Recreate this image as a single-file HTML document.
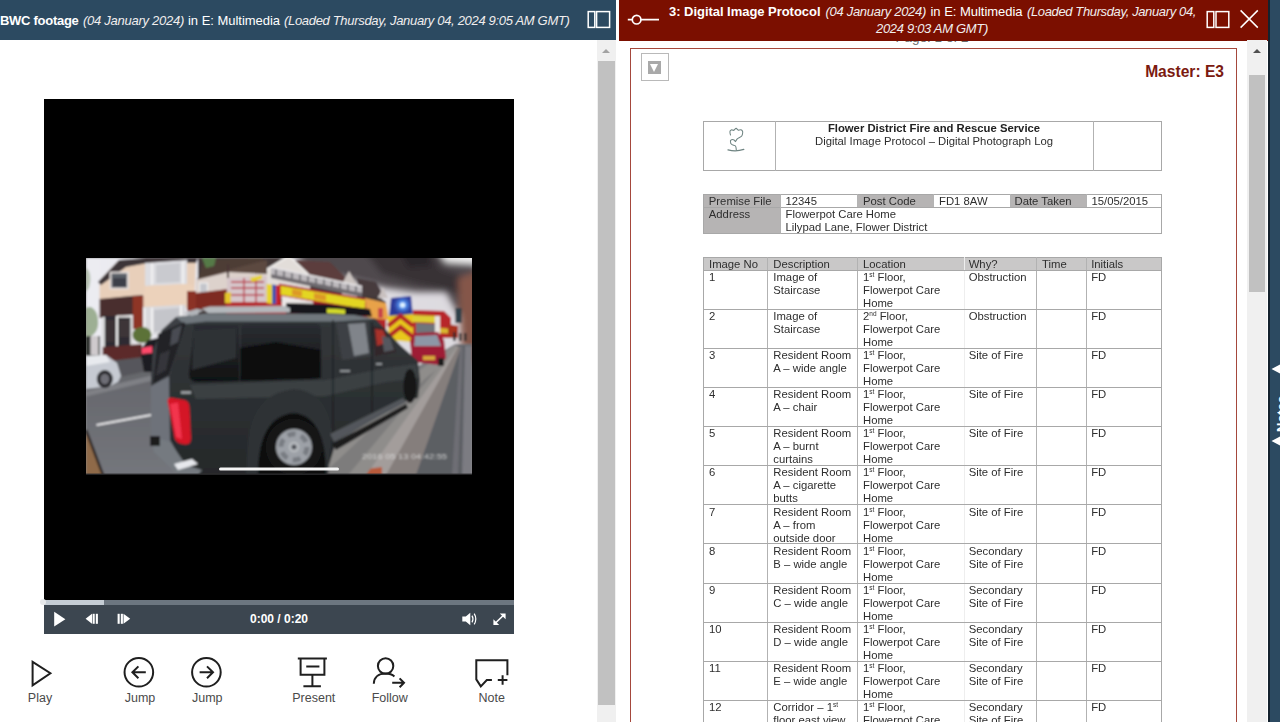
<!DOCTYPE html>
<html lang="en">
<head>
<meta charset="utf-8">
<title>Multimedia viewer</title>
<style>
*{box-sizing:border-box;margin:0;padding:0}
html,body{width:1280px;height:722px;overflow:hidden;background:#fff}
body{position:relative;font-family:"Liberation Sans",sans-serif;color:#222}
.abs{position:absolute}
/* headers */
#hl{left:0;top:0;width:616px;height:40.4px;background:#2c4a61;overflow:hidden}
#hr{left:619px;top:0;width:649px;height:40.6px;background:#7b0f00;overflow:hidden}
.ht{position:absolute;white-space:nowrap;color:#fff;font-size:13px;line-height:17px;transform-origin:0 50%}
.ht.b{font-weight:bold}
.ht.i{font-style:italic;color:#f1eeee}
/* right strip */
#strip{left:1268px;top:0;width:12px;height:722px;background:#2c4a61;border-left:2px solid #14222e}
/* scrollbars */
.track{background:#f0f0f0}
.thumb{background:#c1c1c1}
.arr{width:0;height:0;border-left:4px solid transparent;border-right:4px solid transparent;border-bottom:4px solid #a3a3a3}
/* left panel */
#video{left:44px;top:99px;width:470px;height:501px;background:#000}
#prog{left:44px;top:599.5px;width:470px;height:5px;background:#6c7680}
#progp{left:44px;top:599.5px;width:60px;height:5px;background:#c4ccd4}
#ctrl{left:44px;top:605px;width:470px;height:29px;background:#3c4650}
#time{left:179px;top:611px;width:200px;text-align:center;color:#fff;font-size:12px;font-weight:bold;line-height:16px}
.lbl{position:absolute;font-size:12.5px;line-height:14px;color:#4a4a4a;text-align:center;width:80px;white-space:nowrap}
/* right panel */
#frame{left:630px;top:48px;width:607px;height:700px;border:1.5px solid #a5483c;background:#fff}
#pg{left:832px;top:29.8px;width:200px;text-align:center;font-size:13.5px;line-height:16px;color:#6a6a6a}
#master{left:1100px;top:61.8px;width:124px;text-align:right;font-size:15.6px;font-weight:bold;color:#7b1a10;line-height:20px;white-space:nowrap}
#dd{left:641px;top:53px;width:27.5px;height:28px;border:1px solid #b9b9b9;background:#fff}
#dd i{position:absolute;left:6px;top:7px;width:13px;height:13px;background:#a9a9a9}
#dd b{position:absolute;left:8px;top:10px;width:0;height:0;border-left:4.5px solid transparent;border-right:4.5px solid transparent;border-top:8px solid #fff}
/* document */
#doc{left:0;top:0;width:1280px;height:722px;overflow:hidden;font-size:11.3px;line-height:13px;color:#2e2e2e;pointer-events:none;filter:blur(0.4px)}
#doc .bx{position:absolute;border:1px solid #a8a8a8}
#doc .g{position:absolute;background:#c9c8c8}
#doc .vl{position:absolute;width:1px;background:#b2b2b2}
#doc .hl{position:absolute;height:1px;background:#a8a8a8}
#doc .t{position:absolute;white-space:nowrap}
sup{font-size:6.5px;line-height:0;vertical-align:4px}
</style>
</head>
<body>

<!-- ===== left header ===== -->
<div id="hl" class="abs">
  <span class="ht b" id="l1" style="left:0;top:11.8px;letter-spacing:-0.283px">BWC footage</span>
  <span class="ht i" id="l2" style="left:83px;top:11.8px;letter-spacing:-0.266px">(04 January 2024)</span>
  <span class="ht"   id="l3" style="left:188px;top:11.8px;letter-spacing:-0.030px">in E: Multimedia</span>
  <span class="ht i" id="l4" style="left:284px;top:11.8px;letter-spacing:-0.321px">(Loaded Thursday, January 04, 2024 9:05 AM GMT)</span>
  <svg class="abs" style="left:586px;top:9px" width="26" height="21" viewBox="0 0 26 21"><rect x="2.2" y="2.6" width="6.6" height="15.8" fill="none" stroke="#fff" stroke-width="1.5"/><rect x="10.6" y="2.6" width="13" height="15.8" fill="none" stroke="#fff" stroke-width="1.5"/></svg>
</div>

<!-- ===== right header ===== -->
<div id="pg" class="abs">Page: 1 of 2</div>
<div id="hr" class="abs">
  <svg class="abs" style="left:6px;top:11px" width="38" height="18" viewBox="0 0 38 18"><path d="M2.800 8.700H7.400M16 8.700H34" stroke="#fff" stroke-width="1.700" fill="none"/><circle cx="11.600" cy="8.700" r="4.300" fill="none" stroke="#fff" stroke-width="1.700"/></svg>
  <span class="ht b" id="r1" style="left:50px;top:2.7px;letter-spacing:-0.037px">3: Digital Image Protocol</span>
  <span class="ht i" id="r2" style="left:206.5px;top:2.7px;letter-spacing:-0.295px">(04 January 2024)</span>
  <span class="ht"   id="r3" style="left:311.5px;top:2.7px;letter-spacing:-0.030px">in E: Multimedia</span>
  <span class="ht i" id="r4" style="left:408px;top:2.7px;letter-spacing:-0.369px">(Loaded Thursday, January 04,</span>
  <svg class="abs" style="left:585px;top:8px" width="60" height="24" viewBox="0 0 60 24"><g fill="none" stroke="#fff" stroke-width="1.500"><rect x="3.200" y="3.600" width="6.600" height="15.800"/><rect x="12" y="3.600" width="12.800" height="15.800"/><path d="M36.600 2.400L53.800 19.600M53.800 2.400L36.600 19.600"/></g></svg>
  <span class="ht i" id="r5" style="left:257px;top:19.7px;letter-spacing:-0.312px">2024 9:03 AM GMT)</span>
</div>

<div id="strip" class="abs"></div>
<svg class="abs" style="left:1268px;top:355px" width="12" height="100" viewBox="0 0 12 100"><path d="M3.500 14L12 9.500V18.500ZM3.500 86L12 81.500V90.500Z" fill="#fff"/><text transform="translate(17.500 77) rotate(-90)" font-family="Liberation Sans, sans-serif" font-size="13" font-weight="bold" fill="#fff">Notes</text></svg>

<!-- ===== left panel ===== -->
<div id="video" class="abs"></div>
<!--PHOTO-->
<svg class="abs" style="left:86px;top:258px" width="386" height="217" viewBox="0 0 386 217">
<defs>
<filter id="bl" x="-5%" y="-5%" width="110%" height="110%"><feGaussianBlur stdDeviation="0.8"/></filter>
<filter id="bl2" x="-30%" y="-30%" width="160%" height="160%"><feGaussianBlur stdDeviation="3.2"/></filter>
<filter id="bl3" x="-40%" y="-40%" width="180%" height="180%"><feGaussianBlur stdDeviation="2"/></filter>
<clipPath id="pc"><rect x="0" y="0" width="386" height="217"/></clipPath>
<linearGradient id="sky" x1="0" y1="0" x2="1" y2="0"><stop offset="0" stop-color="#ececf2"/><stop offset="1" stop-color="#dcd9de"/></linearGradient>
<linearGradient id="road" x1="0" y1="0" x2="0" y2="1"><stop offset="0" stop-color="#64656a"/><stop offset="1" stop-color="#74767c"/></linearGradient>
<linearGradient id="body" x1="0" y1="0" x2="0" y2="1"><stop offset="0" stop-color="#34383b"/><stop offset="1" stop-color="#25282a"/></linearGradient>
<linearGradient id="win" x1="0" y1="0" x2="0" y2="1"><stop offset="0" stop-color="#2b2e32"/><stop offset="0.55" stop-color="#1d1f22"/><stop offset="1" stop-color="#0f1011"/></linearGradient>
</defs>
<g clip-path="url(#pc)">
<rect width="386" height="217" fill="#8b8a8c"/>
<g filter="url(#bl)">
<!-- sky -->
<rect x="0" y="0" width="386" height="120" fill="url(#sky)"/>
<!-- smoke -->
<g filter="url(#bl2)">
<path d="M200 -14H350L356 -2 390 4 396 70 372 56 360 34 330 34 300 30 266 22 224 12Z" fill="#4f494d"/>
<path d="M276 -10H344L354 10 378 18 386 42 362 32 330 26 296 16Z" fill="#373135"/>
<path d="M312 -10H340L346 8 322 10Z" fill="#2c272b"/>
<path d="M372 20L396 12V112L376 98Z" fill="#85564a"/>
<path d="M352 -8L392 -8 392 6 360 4Z" fill="#f2f2f2"/>
</g>
<!-- background houses right -->
<path d="M112 0L196 0 214 4 236 6 262 22 286 34 300 44 300 70 112 70Z" fill="#433839"/>
<path d="M118 2L176 0 182 6 140 16 112 22Z" fill="#4e3c36"/>
<path d="M209 2L244 4 262 22 256 28 224 18Z" fill="#5c3e3c"/>
<path d="M176 14L203 -3 224 17 224 40 176 40Z" fill="#e2ddd9"/>
<path d="M178 13L203 -2 222 16" stroke="#f4f2f0" stroke-width="1.600" fill="none"/>
<path d="M256 26L263 13 271 27V40H256Z" fill="#cbc3c0"/>
<path d="M270 20L290 24 298 38 276 38Z" fill="#463a3e"/>
<path d="M292 40L297 29 302 40Z" fill="#c9c1c0"/>
<!-- left tree -->
<path d="M0 50C6 46 12 54 12 62 13 70 10 78 0 80Z" fill="#8fa582" opacity="0.85"/>
<path d="M0 10C4 12 6 20 3 30L0 34Z" fill="#b9c4b4"/>
<!-- house 1 -->
<path d="M13.600 22L32 3 110 0 108 50 13.600 50Z" fill="#e8cfba"/>
<path d="M12 24L33 2 60 0 112 0 110 5 62 5 40 9 15 27Z" fill="#3c3439"/>
<rect x="24.500" y="14.500" width="17.500" height="16" fill="#5a5e66" stroke="#e6e0de" stroke-width="1.800"/>
<rect x="27" y="20" width="13" height="9" fill="#3c4048"/>
<path d="M59 5L101 2V26L59 28Z" fill="#dddde1"/>
<path d="M66 5V27M97 3V26" stroke="#f6f6f6" stroke-width="1.600"/>
<path d="M70 7L94 5V24L70 25Z" fill="#c9cacf"/>
<path d="M59 28L101 26 108 28V48L57 50Z" fill="#ecd2bb"/>
<!-- porch roof, brick -->
<path d="M13.600 41L47 37.700 57 37V60H47V57L13.600 60Z" fill="#4a2e2e"/>
<rect x="46.700" y="38" width="10.600" height="33" fill="#8e3428"/>
<rect x="101" y="33" width="9" height="20" fill="#8b3228"/>
<!-- lower bay window -->
<path d="M57 49L99.500 46.700V75L57 77Z" fill="#d8d8dc"/>
<path d="M58.500 50V76M66 49.500V76M95 47V75" stroke="#f6f6f6" stroke-width="1.800"/>
<path d="M68 52L93 50V72L68 74Z" fill="#c4c5ca"/>
<!-- door -->
<rect x="16.600" y="58" width="30" height="31" fill="#2e2c30"/>
<path d="M17.600 59V89M31 58V89M45.600 57V89M31 58.500H46" stroke="#f1f1f1" stroke-width="2.200" fill="none"/>
<rect x="20" y="62" width="9" height="22" fill="#3a3034"/>
<rect x="33.500" y="62" width="10" height="17" fill="#3c3438"/>
<!-- house 2 -->
<path d="M110 21L142 12 181 2 181 21 142 24Z" fill="#5c4840"/>
<path d="M110 22L142 14 181 16 181 40 110 36Z" fill="#ddd2cc"/>
<rect x="113.500" y="25" width="8" height="12" fill="#c3c5cb" stroke="#f1f1f1" stroke-width="1.200"/>
<path d="M110 35L142 31V52L110 51Z" fill="#7e2a24"/>
<rect x="141" y="6" width="2" height="42" fill="#4a3634"/>
<path d="M116 0L130 0 128 8 120 10Z" fill="#557a46"/>
<!-- bush -->
<ellipse cx="56" cy="77" rx="9.500" ry="8" fill="#5c7238"/>
<!-- low brick wall -->
<path d="M16.600 89L56 86V108H16.600Z" fill="#5c2c2a"/>
<path d="M0 78H14V100H0Z" fill="#2a2e2c"/>
<rect x="4.500" y="78" width="8" height="19" fill="#cfcacd"/>
<!-- road -->
<path d="M0 121L70 104 125 104V217H0Z" fill="url(#road)"/>
<path d="M16 104L66 98V112L20 122Z" fill="#56575c"/>
<path d="M0 136L66 120" stroke="#7f8085" stroke-width="5"/>
<path d="M10.500 167L65 157" stroke="#e6e6e8" stroke-width="2.200"/>
<!-- silver car -->
<path d="M0 98L20 97 31 105 35 118 32 124 24 128 0 131Z" fill="#c6cad2"/>
<path d="M0 98L20 97 24 104 0 108Z" fill="#e8eaee"/>
<ellipse cx="18.800" cy="121" rx="8" ry="9" fill="#26262a"/>
<ellipse cx="18.800" cy="121" rx="4.500" ry="5.200" fill="#6e6e76"/>
<!-- dark car w/ light -->
<path d="M54 92L62 82 72 80V114H58Z" fill="#1f1f23"/>
<path d="M55.500 90L66 88V95L55.500 96Z" fill="#ff4a6a"/>
<!-- fire engine 1 -->
<path d="M140 44L290 44 300 56 300 82 140 72Z" fill="#b5262a"/>
<path d="M141 20L181 18V44H141Z" fill="#d6c6ca"/>
<path d="M145 24H178M145 30H178M145 37H178M158 20V44M170 20V44" stroke="#b8404c" stroke-width="1.400" fill="none"/>
<path d="M164 20L176 17V21L166 24Z" fill="#e6d22a"/>
<path d="M139 35L145 34V45H139Z" fill="#e4c62a"/>
<path d="M185 9L276 28.500 276 35 185 16Z" fill="#bdb9bd"/>
<path d="M185 9L276 28.500" stroke="#e8e6e8" stroke-width="1.400"/>
<path d="M190 11.500V17M198 13V19M206 15V21M214 16.500V22.500M222 18V24M230 20V26M238 21.500V27.500M246 23V29M254 25V31M262 26.500V32.500M270 28V34" stroke="#55555a" stroke-width="1.400"/>
<path d="M185 16L276 35 276 39 185 20Z" fill="#6e6a70"/>
<path d="M193 25.500L280 40.500V54L193 39Z" fill="#b0222a"/>
<path d="M193 27.400L279 42V51L193 36.500Z" fill="#e3d624"/>
<path d="M206 31L216 32.700V39L206 37.300ZM228 35L240 37V43L228 41Z" fill="#d8702a" opacity="0.600"/>
<path d="M196 38L227 43.500V52H196Z" fill="#ece8e8"/>
<path d="M180.600 26L186 26.500V46L180.600 45Z" fill="#e8d42a"/>
<path d="M186 26.500L190 27V46L186 46Z" fill="#3a56b0"/>
<path d="M190 27L194.700 27.500V46L190 46Z" fill="#c4242c"/>
<!-- lit cab window -->
<path d="M279 40L300 45 303 62 281 60Z" fill="#e8a248"/><path d="M292 50L297 50V60L292 60Z" fill="#c8444a"/>
<!-- blue light -->
<path d="M305 40L325 38 327 58 303 59Z" fill="#2a3796"/>
<circle cx="316.600" cy="47" r="6" fill="#5aa2ff" filter="url(#bl3)"/>
<circle cx="316.600" cy="47" r="2.600" fill="#e2f4ff"/>
<!-- chevrons -->
<path d="M301.500 58L327 56V84L303 82Z" fill="#e8c81e"/>
<path d="M302 68L314.500 58 327 68M302 79L314.500 69 327 79" stroke="#b42428" stroke-width="4.200" fill="none"/>
<!-- fire engine 2 -->
<path d="M327 52L358 53 365 60V80L327 80Z" fill="#b8262c"/>
<path d="M327 57L352 58V65L327 64Z" fill="#dccf34"/>
<path d="M330 65L349 66V76L330 75Z" fill="#70747a"/>
<path d="M349 58L354 58V78L349 78Z" fill="#e6e2e0"/>
<path d="M354 70L368 71V76L354 75Z" fill="#d8b82e"/>
<rect x="369.400" y="50" width="6.200" height="15" fill="#2f4048"/>
<path d="M362 66L372 68V80L362 80Z" fill="#a8301c"/>
<!-- pavement right & barrier -->
<path d="M332 108L369 86 386 86V217H250Z" fill="#7d7d80"/>
<path d="M372 87L386 87V217H300Z" fill="#5c5e64"/>
<path d="M370 88L375 89 330 217H280Z" fill="#857e7c"/>
<path d="M368 88L372 89 300 217H280Z" fill="#a39d9b"/>
<path d="M379 88H386V217H376Z" fill="#7c7c82"/>
<path d="M374 88L377 88 372 217H366Z" fill="#6e6e74"/>
<path d="M281 211L296 209V217H279Z" fill="#b85a3a"/>
<!-- sidewalk between truck & barrier -->
<path d="M334 112L366 89 371 89 280 217H150L250 190Z" fill="#8f8d8b"/>
<path d="M340 120L350 112 262 217H236Z" fill="#7d7c7c"/>
<!-- people far right -->
<rect x="367" y="74" width="2.500" height="9" fill="#26262a"/><rect x="373" y="75" width="2.500" height="8" fill="#2e2a2c"/><rect x="378" y="75" width="2.500" height="8" fill="#2e2a2c"/>
<!-- red car -->
<path d="M324 82L330 75 352 74 358 82 360 100 354 107 326 104Z" fill="#9e1c36"/>
<path d="M329 78L351 77 355 88 328 88Z" fill="#8d97a6"/>
<rect x="337" y="98" width="12" height="4" fill="#d8a83a"/>
<path d="M352 100L358 100V108H352Z" fill="#1c1c1e"/>
<!-- roof rack -->
<path d="M200 45L240 46 284 51 286 58.500 240 56.500 200 55.500Z" fill="#17181a"/>
<path d="M241 50.600L259 51.500V56L241 55.300Z" fill="#d4dc2a"/>
<!-- TRUCK -->
<path d="M65 181L65 120 67 92 76 72 90 59 120 55.500 240 56 268 57 290 61 314 87 332 103 334 122 332 140 318 143 250 184 240 217 114 217 100 211 68 190Z" fill="url(#body)"/>
<!-- rear tailgate lighter -->
<path d="M65 181L65 128 83 118 84 182 100 211 86 204 68 190Z" fill="#6e727a"/>
<path d="M66 126L67 92 76 72 90 60 100 60 98 66 84 118Z" fill="#3c3f44"/>
<!-- roof highlight -->
<path d="M90 59L120 55.500 240 56 268 57 290 61 250 63.500 120 63.500 98 66Z" fill="#70777d"/>
<path d="M116 50.500L124 48.600 199 48 204 50 204 54.500 122 55Z" fill="#b4b8bc"/>
<path d="M98 55L110 51 118 52 106 58Z" fill="#b0b4b8"/>

<!-- rear window -->
<path d="M72 76L98 64 99.500 66 83 117 67 126Z" fill="#232427"/>
<path d="M86 72L96 67 92 84 84 88Z" fill="#4a4c52"/>
<path d="M74 96L84 92 80 112 70 118Z" fill="#34363a"/>
<!-- side canopy window -->
<path d="M108 69Q104 66 112 66L228 65Q235 65 235 71V116Q235 121 229 121L112 124Q103 124 103 116Z" fill="url(#win)"/>
<path d="M154 65.500V123" stroke="#34383b" stroke-width="1.600"/>
<path d="M154 90L190 84 235 92V120L154 123Z" fill="#0e0f10"/>
<path d="M108 72L150 70V100L106 112Z" fill="#2e3135"/>
<!-- cab windows -->
<path d="M250 65L282 63 285 98 256 102Z" fill="#3c4044"/>
<path d="M262 66L279 65 283 95 268 98Z" fill="#80848a"/>
<path d="M286.500 68L298 70 310.600 94 289 98Z" fill="#33282a"/>
<path d="M289 71L297 72 302 84 291 88Z" fill="#a8302c"/>
<path d="M296 78L304 80 308 92 298 94Z" fill="#55595e"/>
<!-- body shading highlight -->
<path d="M104 127L240 122 300 110 330 106 333 120 300 124 240 138 110 141Z" fill="#3b4043"/>
<path d="M247 62V180M286 64V160" stroke="#1c1e20" stroke-width="1.200"/>
<!-- tail light -->
<path d="M81.500 143Q81.500 139 87 140L98 142Q103 143 103.500 149L105 180Q105 187 99 186.500L94 185.500Q88.500 184 88 176Z" fill="#d41226"/>
<path d="M84 146L92 144.500 96 181 90 179Z" fill="#f2344e"/>
<!-- bumper -->
<path d="M65 178L84 184 100 207 116 212 112 217 90 215 68 194Z" fill="#757a80"/>
<path d="M88 206L106 201 112 206 92 212Z" fill="#e6e8ec"/>
<rect x="64" y="178" width="10" height="10" fill="#1a1a1c"/>
<path d="M95 134.500H105" stroke="#b0b4b8" stroke-width="2.200"/>
<!-- rear wheel arch + wheel -->
<path d="M162 184Q166 136 208 131 240 133 246 172L242 217H160Z" fill="#2e3235"/>
<path d="M172 217Q172 158 208 155 240 158 240 217Z" fill="#0f1011"/>
<circle cx="208" cy="189" r="28" fill="#161718"/>
<circle cx="208" cy="189" r="18" fill="#9da1a7"/>
<circle cx="208" cy="189" r="13" fill="none" stroke="#787c82" stroke-width="5" stroke-dasharray="8 5.600"/>
<circle cx="208" cy="189" r="5.500" fill="#b4b8bc"/>
<circle cx="208" cy="189" r="2.500" fill="#4a4e54"/>
<!-- side step -->
<path d="M244 176L317 140 320 144 248 184Z" fill="#53575b"/>
<path d="M246 186L320 146 322 150 250 192Z" fill="#1a1b1c"/>
<!-- front wheel -->
<ellipse cx="324" cy="128" rx="6.500" ry="17" fill="#131415"/>
<!-- handles -->
<path d="M254 113H264M290 106H296" stroke="#8e9296" stroke-width="2"/>
<!-- bottom-left corner -->
<path d="M0 174L16 217H0Z" fill="#8f6a48"/>
<path d="M0 172L17 217" stroke="#2a2422" stroke-width="2.500"/>
</g>
<!-- home bar & timestamp -->
<rect x="133" y="209.600" width="120" height="3" rx="1.500" fill="#f4f4f4"/>
<text x="276" y="201" font-family="Liberation Sans, sans-serif" font-size="7.600" fill="#dedede" textLength="85" lengthAdjust="spacingAndGlyphs" filter="url(#bl)" opacity="0.9">2016 05 13 04:42:55</text>
<rect x="0" y="215.600" width="386" height="1.400" fill="#242426"/>
</g>
</svg>
<!--/PHOTO-->
<div id="prog" class="abs"></div><div id="progp" class="abs"></div>
<div id="ctrl" class="abs"></div>
<div class="abs" style="left:40px;top:599px;width:6px;height:6px;border-radius:3px;background:#e6e8ea"></div>
<div id="time" class="abs">0:00 / 0:20</div>

<div class="lbl" style="left:0px;top:690.5px" id="b1">Play</div>
<div class="lbl" style="left:100px;top:690.5px" id="b2">Jump</div>
<div class="lbl" style="left:167.3px;top:690.5px" id="b3">Jump</div>
<div class="lbl" style="left:273.8px;top:690.5px" id="b4">Present</div>
<div class="lbl" style="left:349.7px;top:690.5px" id="b5">Follow</div>
<div class="lbl" style="left:451.7px;top:690.5px" id="b6">Note</div>

<!-- video control icons -->
<svg class="abs" style="left:44px;top:605px" width="470" height="29" viewBox="0 0 470 29">
  <path d="M10.2 6.8V21.6L21.4 14.2Z" fill="#fff"/>
  <path d="M41.600 13.800L48 8.800V18.800Z" fill="#fff"/><rect x="48.600" y="8.800" width="2.100" height="10" fill="#fff"/><rect x="51.800" y="8.800" width="2.100" height="10" fill="#fff"/>
  <rect x="73.600" y="8.800" width="2.100" height="10" fill="#fff"/><rect x="76.800" y="8.800" width="2.100" height="10" fill="#fff"/><path d="M79.500 8.800V18.800L86.200 13.800Z" fill="#fff"/>
  <path d="M418.300 11.600H421.800L426.300 7.800V20.200L421.800 16.400H418.300Z" fill="#fff"/>
  <path d="M428 10.600Q430 14 428 17.400M430.200 8.600Q433.400 14 430.200 19.400" fill="none" stroke="#fff" stroke-width="1.200"/>
  <path d="M451.500 18L459.500 10.200" fill="none" stroke="#fff" stroke-width="1.600"/><path d="M461.600 8.400H455.800L461.600 14.200ZM449.400 19.900V14.200L455.200 19.900Z" fill="#fff"/>
</svg>

<!-- toolbar icons -->
<svg class="abs" style="left:20px;top:650px" width="500" height="45" viewBox="0 0 500 45">
 <g fill="none" stroke="#1f1f1f" stroke-width="2">
  <path d="M12.600 11.800V35.400L30.400 23.200Z" stroke-linejoin="miter"/>
  <circle cx="118.850" cy="22.250" r="14.300"/>
  <path d="M125.800 22.300H112.600M118.400 16.400L112.400 22.300L118.400 28.200"/>
  <circle cx="186.400" cy="22.250" r="14.300"/>
  <path d="M179.600 22.300H192.800M187 16.400L193 22.300L187 28.200"/>
  <path d="M277.800 8.400H306.900M280.600 8.400V24.750H304.400V8.400M286.250 16.500H299.400M292.400 24.750V36.200M283.400 36.200H300.900"/>
  <circle cx="365.600" cy="16" r="7.700"/>
  <path d="M353.800 33.800C354 27 359 23.600 365.600 23.600 369.500 23.600 372.400 24.600 374.400 26.400M372.200 32.800H383.600M379.600 28.400L384 32.800L379.600 37.200"/>
  <path d="M487.400 25.300V10.300H456.300V29.400L460.800 36.400L466.800 30H471.900M477.800 30H487.400M482.600 25.200V34.800"/>
 </g>
</svg>

<!-- left scrollbar -->
<div class="abs track" style="left:596.5px;top:40px;width:19.5px;height:682px"></div>
<div class="abs thumb" style="left:598px;top:61px;width:17px;height:644px"></div>
<div class="abs arr" style="left:601.8px;top:49px"></div>

<!-- ===== right panel ===== -->
<div id="frame" class="abs"></div>
<div id="dd" class="abs"><i></i><b></b></div>
<div id="master" class="abs">Master: E3</div>

<!-- right scrollbar -->
<div class="abs track" style="left:1247px;top:40px;width:20px;height:682px"></div>
<div class="abs thumb" style="left:1249px;top:75px;width:16px;height:217px"></div>
<div class="abs arr" style="left:1253px;top:49px;border-bottom-color:#505050"></div>

<div id="doc" class="abs">
<!--DOC-->
<div class="bx" style="left:703.0px;top:121.0px;width:459.0px;height:49.5px"></div>
<div class="vl" style="left:775.0px;top:121.0px;height:49.5px"></div>
<div class="vl" style="left:1092.7px;top:121.0px;height:49.5px"></div>
<div class="t" style="left:775px;top:121.5px;width:318px;text-align:center;font-weight:bold;color:#222">Flower District Fire and Rescue Service</div>
<div class="t" style="left:775px;top:134.5px;width:318px;text-align:center">Digital Image Protocol – Digital Photograph Log</div>
<svg class="t" style="left:725px;top:125px" width="24" height="30" viewBox="0 0 24 30"><g fill="none" stroke="#6f8482" stroke-width="1.050" stroke-linejoin="round" stroke-linecap="round"><path d="M5.500 10C4.400 6.600 5 5.400 6.100 5 7 4.600 8 5.200 8.800 5.500 9.600 4.600 10.400 3.500 11.100 3.300 12 3.800 12.600 4.800 13.300 5.300 14.400 4.800 15.800 4.600 16.600 5 17.600 5.800 17.900 6.800 17.700 7.700 17.600 9.200 17.200 10.400 16.600 11.100 15.400 12.400 13.400 12.800 12.200 13.800 11.400 14.800 10.900 15.800 10.500 16.600 9.600 15.200 8 14.200 6.600 14.700 5.600 15.200 5.200 16 5.500 16.600 5.400 17.800 5.800 18.800 6.600 19.400 8 20.200 9.800 20.200 10.500 21 11.200 22 11.200 23.600 11.300 24.900"/><path d="M3 24.900Q11.100 27 18.800 24.400" stroke-width="1.300"/></g></svg>
<div class="g" style="left:703.0px;top:193.5px;width:77.0px;height:40.3px;background:#b6b4b4"></div>
<div class="g" style="left:856.5px;top:193.5px;width:76.5px;height:13.7px;background:#b6b4b4"></div>
<div class="g" style="left:1009.5px;top:193.5px;width:76.5px;height:13.7px;background:#b6b4b4"></div>
<div class="bx" style="left:703.0px;top:193.5px;width:459.0px;height:40.3px"></div>
<div class="hl" style="left:780.0px;top:207.2px;width:382.0px"></div>
<div class="hl" style="left:703.0px;top:207.2px;width:77.0px"></div>
<div class="vl" style="left:780.0px;top:193.5px;height:13.7px;background:#b4b4b4"></div>
<div class="vl" style="left:856.5px;top:193.5px;height:13.7px;background:#b4b4b4"></div>
<div class="vl" style="left:933.0px;top:193.5px;height:13.7px;background:#b4b4b4"></div>
<div class="vl" style="left:1009.5px;top:193.5px;height:13.7px;background:#b4b4b4"></div>
<div class="vl" style="left:1086.0px;top:193.5px;height:13.7px;background:#b4b4b4"></div>
<div class="vl" style="left:780.0px;top:207.2px;height:26.6px"></div>
<div class="t" style="left:708.8px;top:195.0px">Premise File</div>
<div class="t" style="left:785.5px;top:195.0px">12345</div>
<div class="t" style="left:863.0px;top:195.0px">Post Code</div>
<div class="t" style="left:939.0px;top:195.0px">FD1 8AW</div>
<div class="t" style="left:1014.5px;top:195.0px">Date Taken</div>
<div class="t" style="left:1091.5px;top:195.0px">15/05/2015</div>
<div class="t" style="left:708.8px;top:208.1px">Address</div>
<div class="t" style="left:785.5px;top:208.1px">Flowerpot Care Home</div>
<div class="t" style="left:785.5px;top:221.0px">Lilypad Lane, Flower District</div>
<div class="g" style="left:703.0px;top:256.6px;width:459.0px;height:13.9px"></div>
<div class="bx" style="left:703.0px;top:256.6px;width:459.0px;height:473.4px"></div>
<div class="vl" style="left:766.8px;top:256.6px;height:473.4px"></div>
<div class="vl" style="left:857.3px;top:256.6px;height:473.4px"></div>
<div class="vl" style="left:963.7px;top:256.6px;height:473.4px;background:#eeeeee"></div>
<div class="vl" style="left:1035.7px;top:256.6px;height:473.4px"></div>
<div class="vl" style="left:1086.3px;top:256.6px;height:473.4px"></div>
<div class="t" style="left:709.0px;top:257.8px">Image No</div>
<div class="t" style="left:773.3px;top:257.8px">Description</div>
<div class="t" style="left:863.0px;top:257.8px">Location</div>
<div class="t" style="left:968.7px;top:257.8px">Why?</div>
<div class="t" style="left:1042.0px;top:257.8px">Time</div>
<div class="t" style="left:1091.2px;top:257.8px">Initials</div>
<div class="hl" style="left:703.0px;top:269.5px;width:459.0px"></div>
<div class="t" style="left:709.0px;top:270.8px">1</div>
<div class="t" style="left:773.3px;top:270.8px">Image of</div>
<div class="t" style="left:773.3px;top:283.8px">Staircase</div>
<div class="t" style="left:863.0px;top:270.8px">1<sup>st</sup> Floor,</div>
<div class="t" style="left:863.0px;top:283.8px">Flowerpot Care</div>
<div class="t" style="left:863.0px;top:296.8px">Home</div>
<div class="t" style="left:968.7px;top:270.8px">Obstruction</div>
<div class="t" style="left:1091.2px;top:270.8px">FD</div>
<div class="hl" style="left:703.0px;top:308.6px;width:459.0px"></div>
<div class="t" style="left:709.0px;top:309.9px">2</div>
<div class="t" style="left:773.3px;top:309.9px">Image of</div>
<div class="t" style="left:773.3px;top:322.9px">Staircase</div>
<div class="t" style="left:863.0px;top:309.9px">2<sup>nd</sup> Floor,</div>
<div class="t" style="left:863.0px;top:322.9px">Flowerpot Care</div>
<div class="t" style="left:863.0px;top:335.9px">Home</div>
<div class="t" style="left:968.7px;top:309.9px">Obstruction</div>
<div class="t" style="left:1091.2px;top:309.9px">FD</div>
<div class="hl" style="left:703.0px;top:347.8px;width:459.0px"></div>
<div class="t" style="left:709.0px;top:349.1px">3</div>
<div class="t" style="left:773.3px;top:349.1px">Resident Room</div>
<div class="t" style="left:773.3px;top:362.1px">A – wide angle</div>
<div class="t" style="left:863.0px;top:349.1px">1<sup>st</sup> Floor,</div>
<div class="t" style="left:863.0px;top:362.1px">Flowerpot Care</div>
<div class="t" style="left:863.0px;top:375.1px">Home</div>
<div class="t" style="left:968.7px;top:349.1px">Site of Fire</div>
<div class="t" style="left:1091.2px;top:349.1px">FD</div>
<div class="hl" style="left:703.0px;top:386.9px;width:459.0px"></div>
<div class="t" style="left:709.0px;top:388.2px">4</div>
<div class="t" style="left:773.3px;top:388.2px">Resident Room</div>
<div class="t" style="left:773.3px;top:401.2px">A – chair</div>
<div class="t" style="left:863.0px;top:388.2px">1<sup>st</sup> Floor,</div>
<div class="t" style="left:863.0px;top:401.2px">Flowerpot Care</div>
<div class="t" style="left:863.0px;top:414.2px">Home</div>
<div class="t" style="left:968.7px;top:388.2px">Site of Fire</div>
<div class="t" style="left:1091.2px;top:388.2px">FD</div>
<div class="hl" style="left:703.0px;top:426.0px;width:459.0px"></div>
<div class="t" style="left:709.0px;top:427.3px">5</div>
<div class="t" style="left:773.3px;top:427.3px">Resident Room</div>
<div class="t" style="left:773.3px;top:440.3px">A – burnt</div>
<div class="t" style="left:773.3px;top:453.3px">curtains</div>
<div class="t" style="left:863.0px;top:427.3px">1<sup>st</sup> Floor,</div>
<div class="t" style="left:863.0px;top:440.3px">Flowerpot Care</div>
<div class="t" style="left:863.0px;top:453.3px">Home</div>
<div class="t" style="left:968.7px;top:427.3px">Site of Fire</div>
<div class="t" style="left:1091.2px;top:427.3px">FD</div>
<div class="hl" style="left:703.0px;top:465.1px;width:459.0px"></div>
<div class="t" style="left:709.0px;top:466.4px">6</div>
<div class="t" style="left:773.3px;top:466.4px">Resident Room</div>
<div class="t" style="left:773.3px;top:479.4px">A – cigarette</div>
<div class="t" style="left:773.3px;top:492.4px">butts</div>
<div class="t" style="left:863.0px;top:466.4px">1<sup>st</sup> Floor,</div>
<div class="t" style="left:863.0px;top:479.4px">Flowerpot Care</div>
<div class="t" style="left:863.0px;top:492.4px">Home</div>
<div class="t" style="left:968.7px;top:466.4px">Site of Fire</div>
<div class="t" style="left:1091.2px;top:466.4px">FD</div>
<div class="hl" style="left:703.0px;top:504.3px;width:459.0px"></div>
<div class="t" style="left:709.0px;top:505.6px">7</div>
<div class="t" style="left:773.3px;top:505.6px">Resident Room</div>
<div class="t" style="left:773.3px;top:518.6px">A – from</div>
<div class="t" style="left:773.3px;top:531.6px">outside door</div>
<div class="t" style="left:863.0px;top:505.6px">1<sup>st</sup> Floor,</div>
<div class="t" style="left:863.0px;top:518.6px">Flowerpot Care</div>
<div class="t" style="left:863.0px;top:531.6px">Home</div>
<div class="t" style="left:968.7px;top:505.6px">Site of Fire</div>
<div class="t" style="left:1091.2px;top:505.6px">FD</div>
<div class="hl" style="left:703.0px;top:543.4px;width:459.0px"></div>
<div class="t" style="left:709.0px;top:544.7px">8</div>
<div class="t" style="left:773.3px;top:544.7px">Resident Room</div>
<div class="t" style="left:773.3px;top:557.7px">B – wide angle</div>
<div class="t" style="left:863.0px;top:544.7px">1<sup>st</sup> Floor,</div>
<div class="t" style="left:863.0px;top:557.7px">Flowerpot Care</div>
<div class="t" style="left:863.0px;top:570.7px">Home</div>
<div class="t" style="left:968.7px;top:544.7px">Secondary</div>
<div class="t" style="left:968.7px;top:557.7px">Site of Fire</div>
<div class="t" style="left:1091.2px;top:544.7px">FD</div>
<div class="hl" style="left:703.0px;top:582.5px;width:459.0px"></div>
<div class="t" style="left:709.0px;top:583.8px">9</div>
<div class="t" style="left:773.3px;top:583.8px">Resident Room</div>
<div class="t" style="left:773.3px;top:596.8px">C – wide angle</div>
<div class="t" style="left:863.0px;top:583.8px">1<sup>st</sup> Floor,</div>
<div class="t" style="left:863.0px;top:596.8px">Flowerpot Care</div>
<div class="t" style="left:863.0px;top:609.8px">Home</div>
<div class="t" style="left:968.7px;top:583.8px">Secondary</div>
<div class="t" style="left:968.7px;top:596.8px">Site of Fire</div>
<div class="t" style="left:1091.2px;top:583.8px">FD</div>
<div class="hl" style="left:703.0px;top:621.7px;width:459.0px"></div>
<div class="t" style="left:709.0px;top:623.0px">10</div>
<div class="t" style="left:773.3px;top:623.0px">Resident Room</div>
<div class="t" style="left:773.3px;top:636.0px">D – wide angle</div>
<div class="t" style="left:863.0px;top:623.0px">1<sup>st</sup> Floor,</div>
<div class="t" style="left:863.0px;top:636.0px">Flowerpot Care</div>
<div class="t" style="left:863.0px;top:649.0px">Home</div>
<div class="t" style="left:968.7px;top:623.0px">Secondary</div>
<div class="t" style="left:968.7px;top:636.0px">Site of Fire</div>
<div class="t" style="left:1091.2px;top:623.0px">FD</div>
<div class="hl" style="left:703.0px;top:660.8px;width:459.0px"></div>
<div class="t" style="left:709.0px;top:662.1px">11</div>
<div class="t" style="left:773.3px;top:662.1px">Resident Room</div>
<div class="t" style="left:773.3px;top:675.1px">E – wide angle</div>
<div class="t" style="left:863.0px;top:662.1px">1<sup>st</sup> Floor,</div>
<div class="t" style="left:863.0px;top:675.1px">Flowerpot Care</div>
<div class="t" style="left:863.0px;top:688.1px">Home</div>
<div class="t" style="left:968.7px;top:662.1px">Secondary</div>
<div class="t" style="left:968.7px;top:675.1px">Site of Fire</div>
<div class="t" style="left:1091.2px;top:662.1px">FD</div>
<div class="hl" style="left:703.0px;top:699.9px;width:459.0px"></div>
<div class="t" style="left:709.0px;top:701.2px">12</div>
<div class="t" style="left:773.3px;top:701.2px">Corridor – 1<sup>st</sup></div>
<div class="t" style="left:773.3px;top:714.2px">floor east view</div>
<div class="t" style="left:863.0px;top:701.2px">1<sup>st</sup> Floor,</div>
<div class="t" style="left:863.0px;top:714.2px">Flowerpot Care</div>
<div class="t" style="left:863.0px;top:727.2px">Home</div>
<div class="t" style="left:968.7px;top:701.2px">Secondary</div>
<div class="t" style="left:968.7px;top:714.2px">Site of Fire</div>
<div class="t" style="left:1091.2px;top:701.2px">FD</div>
<!--/DOC-->
</div>

</body>
</html>
